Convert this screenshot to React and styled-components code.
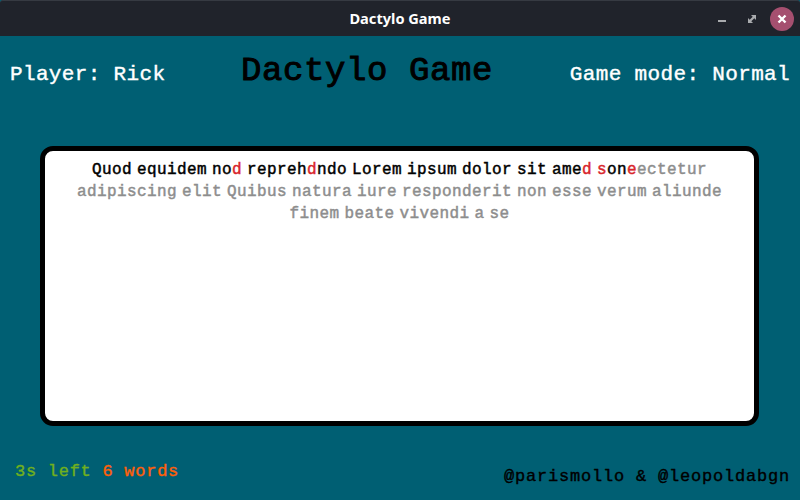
import React from "react";
import styled, { createGlobalStyle } from "styled-components";

const GlobalStyle = createGlobalStyle`
  * { box-sizing: border-box; }
  body { margin: 0; }
`;

const Window = styled.div`
  width: 800px;
  height: 500px;
  display: flex;
  flex-direction: column;
  overflow: hidden;
  background: #005f73;
  font-family: "Liberation Mono", monospace;
  white-space: pre;
`;

const TitleBar = styled.header`
  height: 36px;
  flex: none;
  display: grid;
  grid-template-columns: 1fr auto 1fr;
  align-items: center;
  background: #20232b;
  border-top: 1px solid #363a42;
  border-radius: 3px 3px 0 0;
`;

const WindowTitle = styled.div`
  grid-column: 2;
  color: #fff;
  font: bold 14.6px/20px "Noto Sans", sans-serif;
  margin-top: -2px;
`;

const WindowControls = styled.div`
  display: flex;
  justify-content: flex-end;
  padding-right: 6px;
  gap: 6px;
`;

const ControlIcon = styled.svg`
  width: 24px;
  height: 24px;
  display: block;
`;

const Header = styled.div`
  height: 110px;
  flex: none;
  display: grid;
  grid-template-columns: 231px 1fr 231px;
  align-items: baseline;
  padding: 15px 10px 0;
`;

const Info = styled.div`
  color: #fff;
  font-size: 21px;
  letter-spacing: 0.35px;
  line-height: 26px;
  -webkit-text-stroke: 0.4px #fff;
  justify-self: ${(p) => (p.$end ? "end" : "start")};
`;

const GameTitle = styled.h1`
  margin: 0;
  color: #000;
  font-size: 34px;
  font-weight: normal;
  letter-spacing: 0.6px;
  line-height: 40px;
  -webkit-text-stroke: 1px #000;
`;

const TextPanel = styled.main`
  width: 719px;
  height: 280px;
  flex: none;
  margin-left: 40px;
  padding-top: 8px;
  background: #fff;
  border: 5px solid #000;
  border-radius: 13px;
`;

const Line = styled.div`
  color: #8d8d8d;
  text-align: center;
  font-size: 16px;
  letter-spacing: 0.4px;
  word-spacing: -5px;
  line-height: 22px;
`;

const colors = { done: "#000", wrong: "#d9262c", todo: "#8d8d8d" };

const Run = styled.span`
  color: ${(p) => colors[p.$state]};
  -webkit-text-stroke: 0.45px ${(p) => colors[p.$state]};
`;

const Footer = styled.footer`
  flex: 1;
  display: flex;
  justify-content: space-between;
  padding: 35px 10px 0 15px;
  font-size: 17px;
  line-height: 22px;
`;

const Stats = styled.div`
  letter-spacing: 0.73px;
`;

const Stat = styled.span`
  color: ${(p) => p.$color};
  -webkit-text-stroke: 0.4px ${(p) => p.$color};
`;

const Authors = styled.div`
  padding-top: 5px;
  color: #000;
  letter-spacing: 0.8px;
  -webkit-text-stroke: 0.4px #000;
`;

const lines = [
  [
    ["done", "Quod equidem no"],
    ["wrong", "d"],
    ["done", " repreh"],
    ["wrong", "d"],
    ["done", "ndo Lorem ipsum dolor sit ame"],
    ["wrong", "d s"],
    ["done", "on"],
    ["wrong", "e"],
    ["todo", "ectetur"],
  ],
  [["todo", "adipiscing elit Quibus natura iure responderit non esse verum aliunde"]],
  [["todo", "finem beate vivendi a se"]],
];

export default function App() {
  return (
    <>
      <GlobalStyle />
      <Window>
        <TitleBar>
          <WindowTitle>Dactylo Game</WindowTitle>
          <WindowControls>
            <ControlIcon viewBox="0 0 24 24">
              <rect x="8" y="13" width="8" height="2" fill="#a9abae" />
            </ControlIcon>
            <ControlIcon viewBox="0 0 24 24">
              <path d="M11 8h5v5l-1.7-1.7-3 3L13 16H8v-5l1.7 1.7 3-3z" fill="#a9abae" />
            </ControlIcon>
            <ControlIcon viewBox="0 0 24 24">
              <circle cx="12" cy="12" r="12" fill="#a54f6f" />
              <path d="M8.5 8.5l7 7M15.5 8.5l-7 7" stroke="#fff" strokeWidth="2.4" />
            </ControlIcon>
          </WindowControls>
        </TitleBar>
        <Header>
          <Info>Player: Rick</Info>
          <GameTitle>Dactylo Game</GameTitle>
          <Info $end>Game mode: Normal</Info>
        </Header>
        <TextPanel>
          {lines.map((runs, i) => (
            <Line key={i}>
              {runs.map(([state, text], j) => (
                <Run key={j} $state={state}>{text}</Run>
              ))}
            </Line>
          ))}
        </TextPanel>
        <Footer>
          <Stats>
            <Stat $color="#70b01d">3s left </Stat>
            <Stat $color="#ff5f0a">6 words</Stat>
          </Stats>
          <Authors>@parismollo &amp; @leopoldabgn</Authors>
        </Footer>
      </Window>
    </>
  );
}
